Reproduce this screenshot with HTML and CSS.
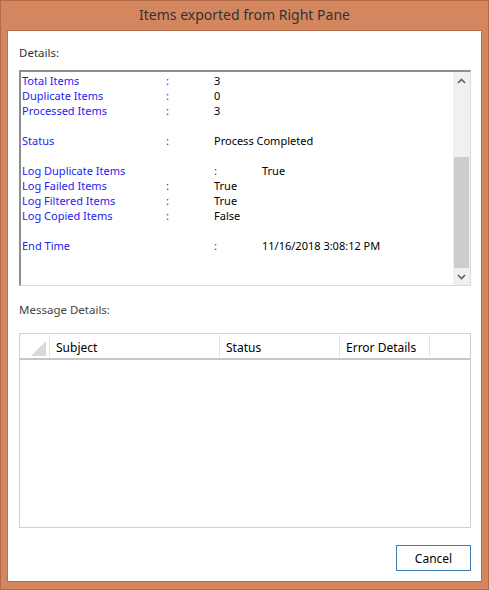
FILE: index.html
```html
<!DOCTYPE html>
<html>
<head>
<meta charset="utf-8">
<link rel="stylesheet" href="styles.css">
</head>
<body>
<div class="window">
  <div class="titlebar">Items exported from Right Pane</div>
  <div class="client">
    <div class="section-label details-label">Details:</div>
    <div class="details-box">
      <div class="details-content">
        <div class="row"><span class="lbl">Total Items</span><span class="col">:</span><span class="val">3</span></div>
        <div class="row"><span class="lbl">Duplicate Items</span><span class="col">:</span><span class="val">0</span></div>
        <div class="row"><span class="lbl">Processed Items</span><span class="col">:</span><span class="val">3</span></div>
        <div class="row blank"></div>
        <div class="row"><span class="lbl">Status</span><span class="col">:</span><span class="val">Process Completed</span></div>
        <div class="row blank"></div>
        <div class="row wide"><span class="lbl">Log Duplicate Items</span><span class="col">:</span><span class="val">True</span></div>
        <div class="row"><span class="lbl">Log Failed Items</span><span class="col">:</span><span class="val">True</span></div>
        <div class="row"><span class="lbl">Log Filtered Items</span><span class="col">:</span><span class="val">True</span></div>
        <div class="row"><span class="lbl">Log Copied Items</span><span class="col">:</span><span class="val">False</span></div>
        <div class="row blank"></div>
        <div class="row wide"><span class="lbl">End Time</span><span class="col">:</span><span class="val">11/16/2018 3:08:12 PM</span></div>
      </div>
      <div class="scrollbar">
        <div class="sb-btn"><svg width="9" height="6" viewBox="0 0 9 6"><path d="M1 5 L4.5 1.5 L8 5" fill="none" stroke="#606060" stroke-width="1.6"/></svg></div>
        <div class="sb-track"><div class="sb-thumb"></div></div>
        <div class="sb-btn"><svg width="9" height="6" viewBox="0 0 9 6"><path d="M1 1 L4.5 4.5 L8 1" fill="none" stroke="#606060" stroke-width="1.6"/></svg></div>
      </div>
    </div>
    <div class="section-label msg-label">Message Details:</div>
    <div class="grid">
      <div class="grid-head">
        <div class="hcell corner"><svg width="18" height="18" viewBox="0 0 18 18"><path d="M17 2 L17 17 L2 17 Z" fill="#d9d9d9"/></svg></div>
        <div class="hcell subject">Subject</div>
        <div class="hcell status">Status</div>
        <div class="hcell errors">Error Details</div>
      </div>
    </div>
    <div class="buttons">
      <button class="btn">Cancel</button>
    </div>
  </div>
</div>
</body>
</html>
```
FILE: styles.css
```css
html, body {
  margin: 0;
  padding: 0;
}
body {
  font-family: "Noto Sans", "Open Sans", sans-serif;
  font-size: 12px;
  color: #000;
}
.window {
  width: 489px;
  height: 590px;
  box-sizing: border-box;
  background: #d4865f;
  border: 1px solid #b36a47;
  display: flex;
  flex-direction: column;
  padding: 0 6px 7px 6px;
}
.titlebar {
  height: 29px;
  line-height: 28px;
  text-align: center;
  font-size: 14px;
  color: #333;
}
.client {
  flex: 1;
  background: #fff;
  border: 1px solid #b5714f;
  display: flex;
  flex-direction: column;
  padding: 0 10px 0 11px;
}
.section-label {
  font-size: 11.5px;
  color: #333;
  line-height: 15px;
}
.details-label {
  margin-top: 14px;
  height: 25px;
}
.details-box {
  height: 216px;
  box-sizing: border-box;
  border-top: 2px solid #8e8e8e;
  border-left: 2px solid #8e8e8e;
  border-right: 1px solid #dadada;
  border-bottom: 1px solid #dadada;
  display: flex;
}
.details-content {
  flex: 1;
  padding: 1px 0 0 1px;
}
.row {
  display: grid;
  grid-template-columns: 144px 48px 48px 1fr;
  height: 15px;
  line-height: 15px;
  font-size: 11px;
  white-space: nowrap;
}
.lbl { color: #1c1cf5; }
.col { color: #1c1cf5; }
.val { color: #000; grid-column: span 2; }
.row.wide .lbl { grid-column: span 2; }
.row.wide .val { grid-column: span 1; }
.scrollbar {
  width: 17px;
  background: #f0f0f0;
  display: flex;
  flex-direction: column;
}
.sb-btn {
  height: 17px;
  display: flex;
  align-items: center;
  justify-content: center;
}
.sb-track {
  flex: 1;
  display: flex;
  flex-direction: column;
  padding-top: 68px;
}
.sb-thumb {
  flex: 1;
  margin: 0 1px;
  background: #cdcdcd;
}
.msg-label {
  margin-top: 16px;
  height: 31px;
  color: #444;
}
.grid {
  height: 195px;
  box-sizing: border-box;
  border: 1px solid #d0d0d0;
}
.grid-head {
  display: flex;
  height: 26px;
  border-bottom: 2px solid #c6c6c6;
  box-sizing: border-box;
  padding-top: 1px;
}
.hcell {
  box-sizing: border-box;
  font-size: 12px;
  line-height: 24px;
  padding-top: 1px;
  padding-left: 6px;
  border-right: 1px solid #e2e2e2;
  margin-bottom: 1px;
}
.corner {
  width: 30px;
  padding: 4px 0 0 9px;
}
.corner svg { display: block; }
.subject { width: 170px; }
.status { width: 120px; }
.errors { width: 90px; }
.buttons {
  display: flex;
  justify-content: flex-end;
  margin-top: 17px;
}
.btn {
  width: 75px;
  height: 26px;
  box-sizing: border-box;
  background: #fff;
  border: 1px solid #3d80b8;
  font-family: "Noto Sans", "Open Sans", sans-serif;
  font-size: 12px;
  color: #000;
  padding: 0;
}
```
